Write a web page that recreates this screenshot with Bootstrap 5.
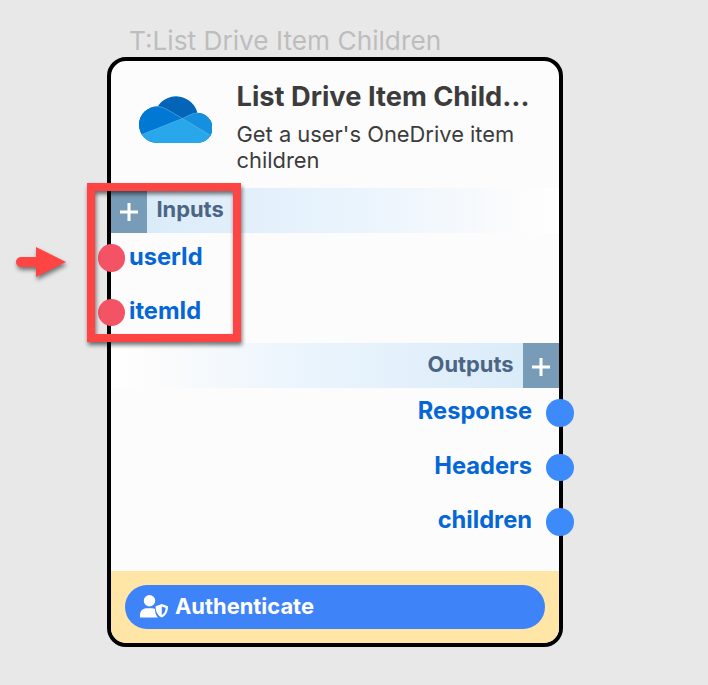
<!DOCTYPE html>
<html lang="en">
<head>
<meta charset="utf-8">
<meta name="viewport" content="width=device-width, initial-scale=1">
<title>List Drive Item Children</title>
<link href="https://cdn.jsdelivr.net/npm/bootstrap@5.3.0/dist/css/bootstrap.min.css" rel="stylesheet">
<style>
  body { background: #e8e8e8; font-family: Inter, "Liberation Sans", sans-serif; width: 708px; height: 685px; }
  .node-label { color: #bdbdbd; font-size: 26.25px; line-height: 32px; padding: 25px 0 0 129px; }
  .node { width: 456px; height: 590px; margin-left: 107px; border: 4px solid #000; border-radius: 19px; background: #fcfcfc; }
  .node-head { height: 127px; padding: 19px 0 0 28px; color: #3c3c3c; }
  .node-logo { width: 73px; height: 47px; margin: 16px 24.500px 0 0; }
  .node-title { font-size: 27.250px; line-height: 34px; font-weight: 700; }
  .node-desc { font-size: 21.9px; line-height: 26px; margin-top: 7px; width: 300px; }
  .section-bar { height: 45px; color: #4b6584; font-size: 21.900px; line-height: 42px; font-weight: 700; }
  .bar-in { background: linear-gradient(90deg, #d8eaf8, #eaf4fd 55%, #fcfcfc 92%, #fff); }
  .bar-out { background: linear-gradient(270deg, #d8eaf8, #eaf4fd 55%, #fcfcfc 92%, #fff); }
  .bar-in span { margin-left: 9px; }
  .bar-out span { margin-right: 9px; }
  .add { width: 36.400px; height: 45px; background: #789cb8; }
  .bar-in .add { padding-top: 3px; }
  .bar-out .add { padding-top: 2px; }
  .ports { color: #0566d6; font-size: 23.700px; font-weight: 700; line-height: 46px; }
  .ports-in { height: 110px; }
  .port { height: 54.700px; }
  .ports-out { height: 183px; }
  .dot { width: 27.600px; height: 27.600px; border-radius: 50%; margin-top: 11px; }
  .dot-in { background: #f45265; margin-left: -13.300px; margin-right: 3.700px; }
  .ports-in .port:first-child .t-user { padding-top: 1px; }
  .dot-out { background: #3d8bfa; margin-right: -15px; margin-left: 14.400px; }
  .node-foot { height: 72px; padding: 14px; background: #ffe6a6; border-radius: 0 0 15px 15px; }
  .auth, .auth:hover { height: 44px; background: #3f83f8; color: #fff; font-size: 21.900px; font-weight: 700; line-height: 42px; padding: 0 0 2px 15px; border: 0; }
  .auth svg { margin-right: 7px; }
  .callout-box { left: 87px; top: 183px; width: 154px; height: 159px; border: 8px solid #ff4444; filter: drop-shadow(1px 3px 2px rgba(0,0,0,.55)); }
  .callout-arrow { left: 10px; top: 240px; filter: drop-shadow(1px 3px 2px rgba(0,0,0,.5)); }
</style>
<script src="https://cdn.jsdelivr.net/npm/bootstrap@5.3.0/dist/js/bootstrap.bundle.min.js"></script>
</head>
<body class="position-relative overflow-hidden">
  <div class="node-label text-nowrap">T:List Drive Item Children</div>
  <div class="node">
    <div class="node-head d-flex align-items-start">
      <svg class="node-logo flex-shrink-0" viewBox="0 0 73 47">
        <defs><clipPath id="cloud"><path d="M18 47A18.300 18.300 0 0 1 18.700 10.400A22 22 0 0 1 58.500 17A15 15 0 0 1 58.500 47Z"/></clipPath></defs>
        <g clip-path="url(#cloud)">
          <path fill="#0364b8" d="M0 0H73V47H0Z"/>
          <path fill="#0078d4" d="M0 8L18.700 10.400Q24 11 28 13.500L43.500 23L3 39L-2 40Z"/>
          <path fill="#1490df" d="M43.500 22.500L52 18.500Q55 17 58.500 17L73 14V41L70 39Z"/>
          <path fill="#28a8ea" d="M43.500 22.500L3 38.500L0 39V47H73V40L71 39Z"/>
          <path fill="none" stroke="#65b9ec" stroke-width=".6" d="M3 38.500L43.500 22.500L71 39M18.700 10.400Q24 11 28 13.500L43.500 22.500L52 18.500Q55 17 58.500 17"/>
        </g>
      </svg>
      <div>
        <div class="node-title text-nowrap">List Drive Item Child…</div>
        <div class="node-desc">Get a user's OneDrive item<br>children</div>
      </div>
    </div>
    <div class="section-bar bar-in d-flex">
      <div class="add d-flex align-items-center justify-content-center">
        <svg width="18" height="18" viewBox="0 0 18 18"><path d="M9 0V18M0 9H18" stroke="#fff" stroke-width="3"/></svg>
      </div>
      <span>Inputs</span>
    </div>
    <div class="ports ports-in">
      <div class="port d-flex"><i class="dot dot-in"></i><span class="t-user">userId</span></div>
      <div class="port d-flex"><i class="dot dot-in"></i><span>itemId</span></div>
    </div>
    <div class="section-bar bar-out d-flex justify-content-end">
      <span>Outputs</span>
      <div class="add d-flex align-items-center justify-content-center">
        <svg width="18" height="18" viewBox="0 0 18 18"><path d="M9 0V18M0 9H18" stroke="#fff" stroke-width="3"/></svg>
      </div>
    </div>
    <div class="ports ports-out">
      <div class="port d-flex justify-content-end"><span>Response</span><i class="dot dot-out"></i></div>
      <div class="port d-flex justify-content-end"><span>Headers</span><i class="dot dot-out"></i></div>
      <div class="port d-flex justify-content-end"><span>children</span><i class="dot dot-out"></i></div>
    </div>
    <div class="node-foot">
      <button class="auth btn rounded-pill w-100 d-flex align-items-center" type="button">
        <svg width="28" height="23" viewBox="0 0 28 23" fill="#fff"><circle cx="9.500" cy="5.700" r="5.700"/><path d="M0 22.500V20C0 16 3 13.300 7 13.300H12Q14 13.300 15 14C15 18 16 20.500 18 22.500Z"/><path fill-rule="evenodd" d="M21.800 9L28 11.300C28 17 26 20.500 21.800 22.600C17.600 20.500 15.600 17 15.600 11.300ZM21.800 11.600V20C24.300 18.500 25.500 16.300 25.600 13Z"/></svg>
        <span>Authenticate</span>
      </button>
    </div>
  </div>
  <div class="callout-box position-absolute"></div>
  <svg class="callout-arrow position-absolute" width="60" height="40" viewBox="0 0 60 40"><path fill="#ff4444" d="M11 17H26V7L56 22L26 37V27H11A5 5 0 0 1 11 17Z"/></svg>
</body>
</html>
